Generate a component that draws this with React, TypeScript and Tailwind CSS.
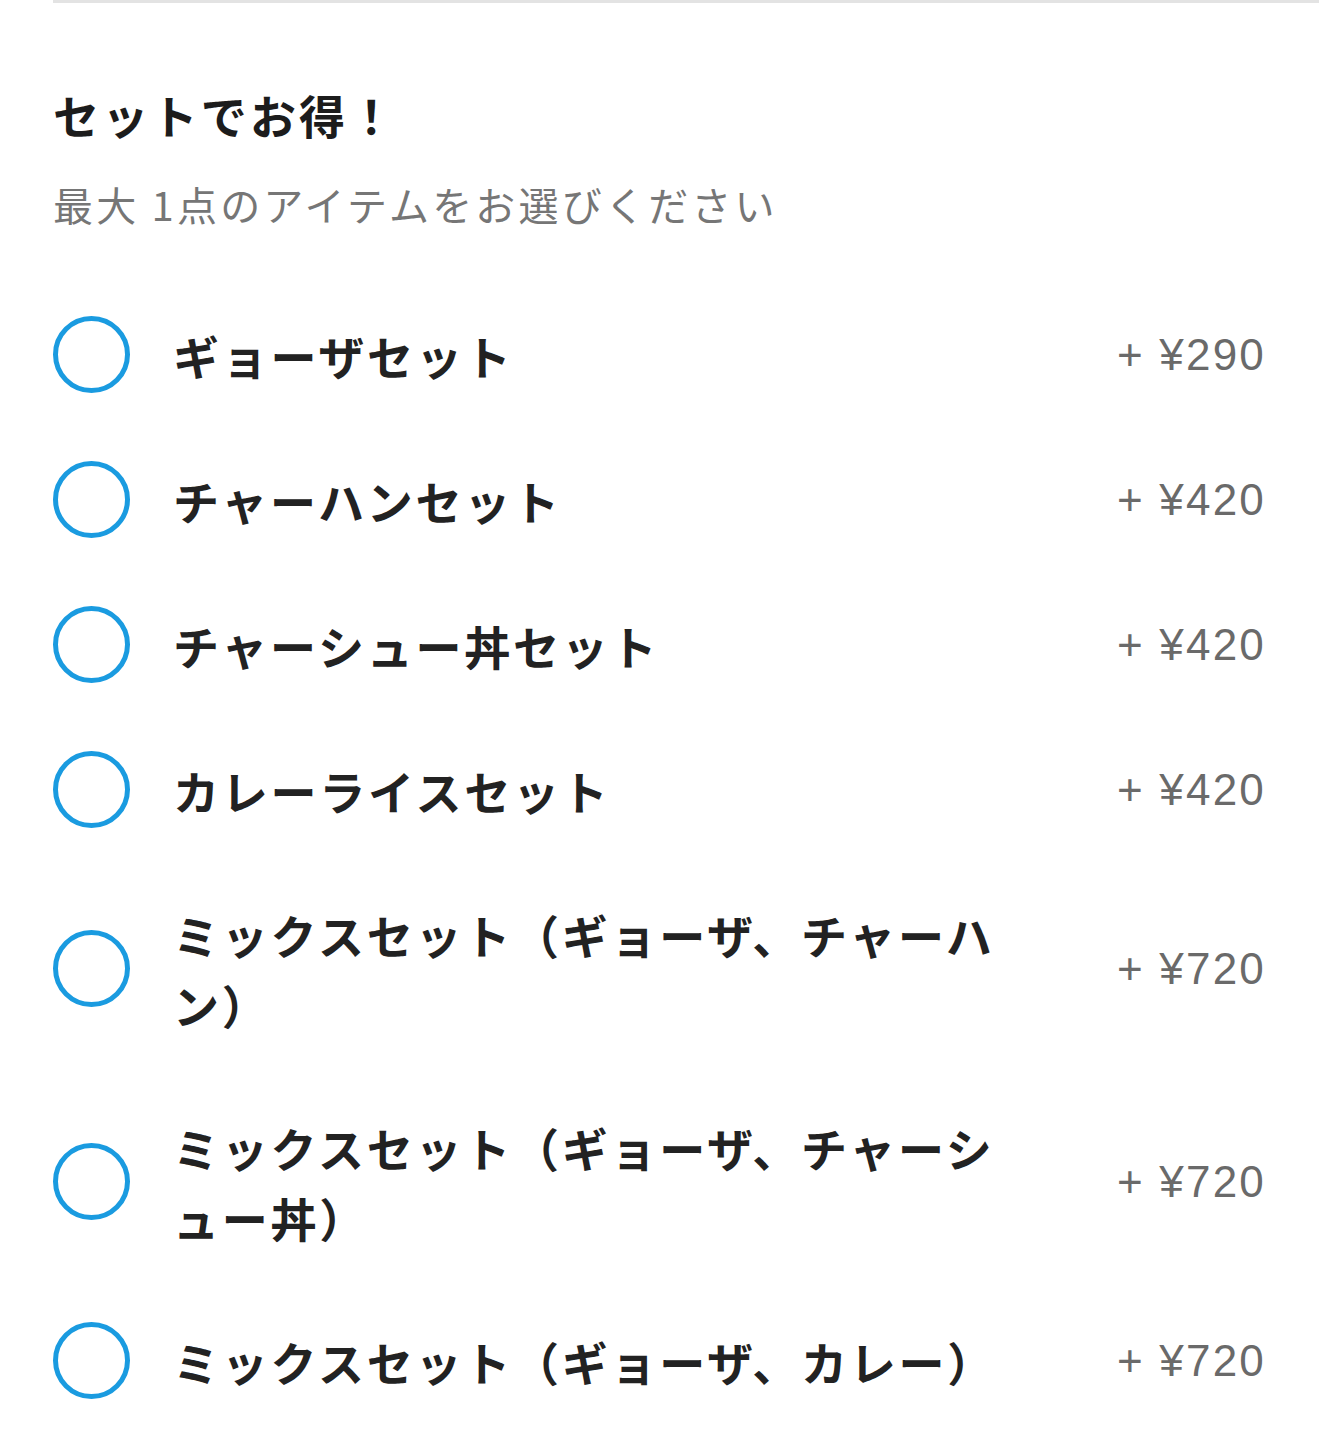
import React from "react";

const items = [
  { name: "ギョーザセット", price: "+ ¥290" },
  { name: "チャーハンセット", price: "+ ¥420" },
  { name: "チャーシュー丼セット", price: "+ ¥420" },
  { name: "カレーライスセット", price: "+ ¥420" },
  { name: "ミックスセット（ギョーザ、チャーハン）", price: "+ ¥720" },
  { name: "ミックスセット（ギョーザ、チャーシュー丼）", price: "+ ¥720" },
  { name: "ミックスセット（ギョーザ、カレー）", price: "+ ¥720" },
];

export default function App() {
  return (
    <div
      className="w-[1319px] h-[1448px] bg-white overflow-hidden"
      style={{ fontFamily: '"Noto Sans CJK JP", "Noto Sans", sans-serif' }}
    >
      <div className="ml-[53px] h-[3px] bg-[#e3e3e3]" />
      <div className="pl-[53px] pr-[53px]">
        <h2 className="mt-[81px] text-[46px] leading-[60px] font-bold text-[#1c1c1c] tracking-[0.07em]">
          セットでお得！
        </h2>
        <p className="mt-[32px] text-[40px] leading-[56px] text-[#767676] tracking-[0.08em]">
          最大 1点のアイテムをお選びください
        </p>
        <ul className="mt-[50px]">
          {items.map((it) => (
            <li key={it.name} className="flex items-center py-[34px]">
              <span className="shrink-0 w-[77px] h-[77px] rounded-full border-[5px] border-[#1a9be0]" />
              <span className="block ml-[43px] w-[840px] py-[2.5px] text-[46px] leading-[70px] font-bold text-[#222222] tracking-[0.06em]">
                {it.name}
              </span>
              <span
                className="block ml-auto text-[44px] leading-none text-[#6a6a6a] whitespace-pre tracking-[0.05em]"
                style={{ fontFamily: '"Liberation Sans", "Noto Sans CJK JP", sans-serif' }}
              >
                {it.price}
              </span>
            </li>
          ))}
        </ul>
      </div>
    </div>
  );
}
